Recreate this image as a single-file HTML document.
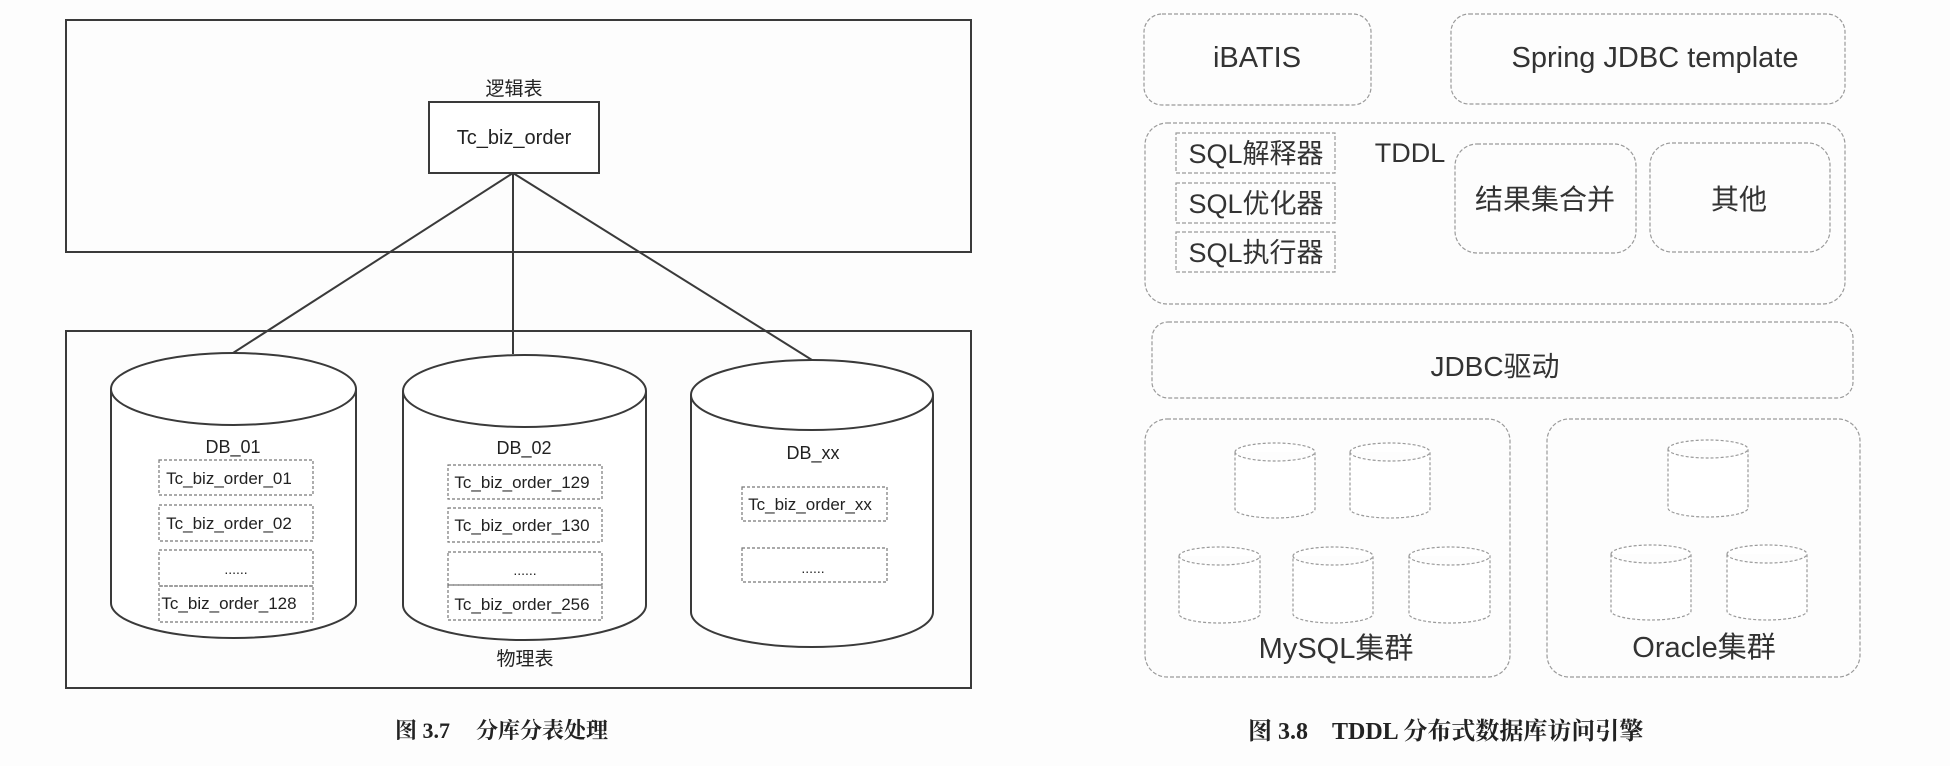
<!DOCTYPE html>
<html><head><meta charset="utf-8"><style>
html,body{margin:0;padding:0;background:#fdfdfd;}
svg{display:block}
.l{font-family:"Liberation Sans","Noto Sans CJK SC",sans-serif;fill:#222}
.r{font-family:"Liberation Sans","Noto Sans CJK SC",sans-serif;fill:#333}
.cap{font-family:"Liberation Serif","Noto Serif CJK SC",serif;fill:#222;font-weight:bold}
</style></head><body>
<svg width="1950" height="766" viewBox="0 0 1950 766" xmlns="http://www.w3.org/2000/svg">
<rect width="1950" height="766" fill="#fdfdfd"/>
<!-- LEFT -->
<g stroke="#3a3a3a" stroke-width="2" fill="none">
<rect x="66" y="20" width="905" height="232"/>
<rect x="66" y="331" width="905" height="357"/>
<rect x="429" y="102" width="170" height="71" fill="#fff"/>
<line x1="513" y1="173" x2="233" y2="353"/>
<line x1="513" y1="173" x2="513" y2="354"/>
<line x1="513" y1="173" x2="812" y2="360"/>
<path d="M111 389 A122.5 36 0 0 1 356 389 L356 603 A122.5 35 0 0 1 111 603 Z" fill="#fff"/>
<path d="M111 389 A122.5 36 0 0 0 356 389"/>
<path d="M403 391 A121.5 36 0 0 1 646 391 L646 605 A121.5 35 0 0 1 403 605 Z" fill="#fff"/>
<path d="M403 391 A121.5 36 0 0 0 646 391"/>
<path d="M691 395 A121 35 0 0 1 933 395 L933 612 A121 35 0 0 1 691 612 Z" fill="#fff"/>
<path d="M691 395 A121 35 0 0 0 933 395"/>
</g>
<g stroke="#777" stroke-width="1.2" fill="none" stroke-dasharray="3 2">
<rect x="159" y="460" width="154" height="35"/>
<rect x="159" y="505" width="154" height="36"/>
<rect x="159" y="550" width="154" height="36"/>
<rect x="159" y="586" width="154" height="36"/>
<rect x="448" y="465" width="154" height="34"/>
<rect x="448" y="508" width="154" height="34"/>
<rect x="448" y="552" width="154" height="33"/>
<rect x="448" y="585" width="154" height="35"/>
<rect x="742" y="487" width="145" height="34"/>
<rect x="742" y="548" width="145" height="34"/>
</g>
<g class="l" text-anchor="middle">
<text x="514" y="95" font-size="19">逻辑表</text>
<text x="514" y="144" font-size="20">Tc_biz_order</text>
<text x="233" y="453" font-size="18">DB_01</text>
<text x="229" y="484" font-size="17">Tc_biz_order_01</text>
<text x="229" y="529" font-size="17">Tc_biz_order_02</text>
<text x="236" y="574" font-size="14">......</text>
<text x="229" y="609" font-size="17">Tc_biz_order_128</text>
<text x="524" y="454" font-size="18">DB_02</text>
<text x="522" y="488" font-size="17">Tc_biz_order_129</text>
<text x="522" y="531" font-size="17">Tc_biz_order_130</text>
<text x="525" y="575" font-size="14">......</text>
<text x="522" y="610" font-size="17">Tc_biz_order_256</text>
<text x="813" y="459" font-size="18">DB_xx</text>
<text x="810" y="510" font-size="17">Tc_biz_order_xx</text>
<text x="813" y="573" font-size="14">......</text>
<text x="525" y="665" font-size="19">物理表</text>
</g>
<text class="cap" x="395" y="738" font-size="22">图 3.7<tspan dx="26">分库分表处理</tspan></text>
<!-- RIGHT -->
<g stroke="#9a9a9a" stroke-width="1.2" fill="none" stroke-dasharray="4 2">
<rect x="1144" y="14" width="227" height="91" rx="18"/>
<rect x="1451" y="14" width="394" height="90" rx="18"/>
<rect x="1145" y="123" width="700" height="181" rx="22"/>
<rect x="1176" y="133" width="159" height="40"/>
<rect x="1176" y="183" width="159" height="40"/>
<rect x="1176" y="232" width="159" height="40"/>
<rect x="1455" y="144" width="181" height="109" rx="22"/>
<rect x="1650" y="143" width="180" height="109" rx="22"/>
<rect x="1152" y="322" width="701" height="76" rx="16"/>
<rect x="1145" y="419" width="365" height="258" rx="22"/>
<rect x="1547" y="419" width="313" height="258" rx="22"/>
</g>
<g stroke="#9a9a9a" stroke-width="1.2" fill="#fff" stroke-dasharray="3 2">
<path d="M1235 452 A40 9 0 0 1 1315 452 L1315 509 A40 9 0 0 1 1235 509 Z M1235 452 A40 9 0 0 0 1315 452"/>
<path d="M1350 452 A40 9 0 0 1 1430 452 L1430 509 A40 9 0 0 1 1350 509 Z M1350 452 A40 9 0 0 0 1430 452"/>
<path d="M1179 556 A40.5 9 0 0 1 1260 556 L1260 614 A40.5 9 0 0 1 1179 614 Z M1179 556 A40.5 9 0 0 0 1260 556"/>
<path d="M1293 556 A40 9 0 0 1 1373 556 L1373 614 A40 9 0 0 1 1293 614 Z M1293 556 A40 9 0 0 0 1373 556"/>
<path d="M1409 556 A40.5 9 0 0 1 1490 556 L1490 614 A40.5 9 0 0 1 1409 614 Z M1409 556 A40.5 9 0 0 0 1490 556"/>
<path d="M1668 449 A40 9 0 0 1 1748 449 L1748 508 A40 9 0 0 1 1668 508 Z M1668 449 A40 9 0 0 0 1748 449"/>
<path d="M1611 554 A40 9 0 0 1 1691 554 L1691 611 A40 9 0 0 1 1611 611 Z M1611 554 A40 9 0 0 0 1691 554"/>
<path d="M1727 554 A40 9 0 0 1 1807 554 L1807 611 A40 9 0 0 1 1727 611 Z M1727 554 A40 9 0 0 0 1807 554"/>
</g>
<g class="r" text-anchor="middle">
<text x="1257" y="67" font-size="29">iBATIS</text>
<text x="1655" y="67" font-size="29">Spring JDBC template</text>
<text x="1256" y="163" font-size="27">SQL解释器</text>
<text x="1256" y="213" font-size="27">SQL优化器</text>
<text x="1256" y="262" font-size="27">SQL执行器</text>
<text x="1410" y="162" font-size="27">TDDL</text>
<text x="1545" y="209" font-size="28">结果集合并</text>
<text x="1739" y="209" font-size="28">其他</text>
<text x="1495" y="376" font-size="28">JDBC驱动</text>
<text x="1336" y="658" font-size="29">MySQL集群</text>
<text x="1704" y="657" font-size="29">Oracle集群</text>
</g>
<text class="cap" x="1248" y="739" font-size="24">图 3.8<tspan dx="24">TDDL 分布式数据库访问引擎</tspan></text>
</svg>
</body></html>
